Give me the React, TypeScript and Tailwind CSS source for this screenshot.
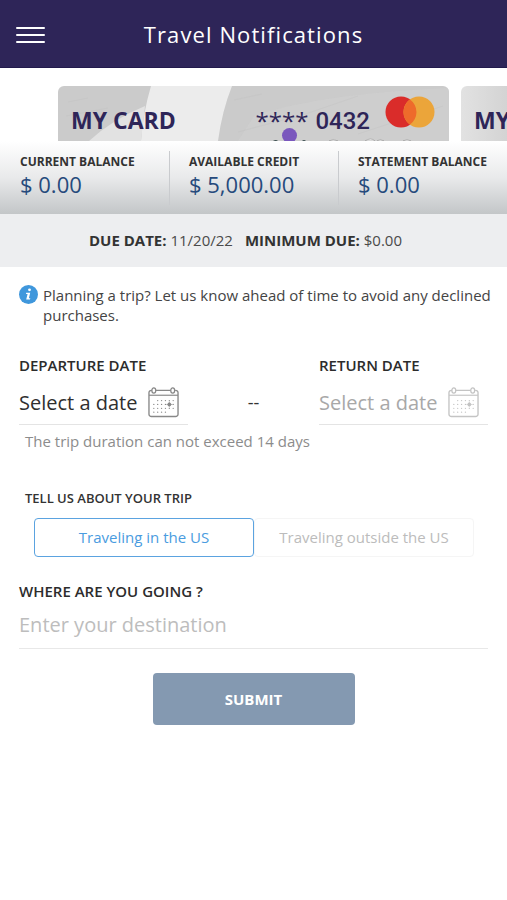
import { useState } from "react";

const balances = [
  { label: "CURRENT BALANCE", amount: "$ 0.00" },
  { label: "AVAILABLE CREDIT", amount: "$ 5,000.00" },
  { label: "STATEMENT BALANCE", amount: "$ 0.00" },
];

function CalendarIcon() {
  const rows = [
    { y: 13, xs: [9, 13, 17, 21, 25] },
    { y: 17, xs: [5, 9, 13, 17, 25] },
    { y: 21, xs: [5, 9, 13, 17, 21, 25] },
    { y: 25, xs: [5, 9, 13, 17] },
  ];
  return (
    <svg width="31" height="31" viewBox="0 0 32 32" fill="none" stroke="currentColor" aria-hidden="true">
      <path d="M4 3.5H3.5a2.5 2.5 0 0 0-2.5 2.5V28a2.5 2.5 0 0 0 2.5 2.5h25A2.5 2.5 0 0 0 31 28V6a2.5 2.5 0 0 0-2.5-2.5H28M8 3.5H23.5" strokeWidth="1.4" />
      <path d="M1 8.5H31" strokeWidth="1.2" />
      <ellipse cx="6" cy="3.5" rx="2" ry="2.7" strokeWidth="1.3" />
      <ellipse cx="25.5" cy="3.5" rx="2" ry="2.7" strokeWidth="1.3" />
      <g fill="currentColor" stroke="none">
        {rows.map((row) => row.xs.map((x) => <circle key={`${x}-${row.y}`} cx={x + 1} cy={row.y + 1} r="0.7" />))}
        <circle cx="22" cy="18" r="1.9" />
      </g>
      <path d="M19 18H25M22 15V21" strokeWidth="0.7" />
    </svg>
  );
}

function CardPattern() {
  return (
    <svg className="absolute inset-0 h-full w-full" viewBox="0 0 391 55" preserveAspectRatio="xMinYMin slice" aria-hidden="true">
      <rect width="391" height="55" fill="#cbcbcb" />
      <path d="M93 0H174Q164 25 160 55H83Q85 27 93 0Z" fill="#ececec" />
      <path d="M31 55Q55 33 87 20L83 55Z" fill="#e2e2e2" />
      <path d="M196 30Q260 8 391 2V55H180Z" fill="#d0d0d0" opacity="0.6" />
      <g stroke="#bdbdbd" strokeWidth="0.5" opacity="0.5">
        <path d="M176 14L204 8M230 34L300 10M300 48L385 20M180 46L240 30M10 16L30 12M8 30L50 22" />
      </g>
      <g fill="#f4f4f4" stroke="#8a8a8a" strokeWidth="0.5">
        <path d="M271 55q4-3 9 0zM307 55q6-4 10 0zM319 55q3-3 7 0zM345 55q4-3 8 0z" />
      </g>
      <path d="M215 55q3-2 5 0zM244 55q2-2 4 0z" fill="#3c4f50" />
    </svg>
  );
}

function NetworkLogo() {
  return (
    <svg width="50" height="32" viewBox="0 0 50 32" role="img" aria-label="Card network">
      <circle cx="16" cy="16" r="15.5" fill="#da2c2a" />
      <circle cx="34" cy="16" r="15.5" fill="#eba53a" />
      <path d="M25 3.4a15.5 15.5 0 0 1 0 25.2a15.5 15.5 0 0 1 0-25.2Z" fill="#ee6b2b" />
    </svg>
  );
}

function DateField({ id, label, muted }: { id: string; label: string; muted?: boolean }) {
  return (
    <div className="w-[169px]">
      <label htmlFor={id} className="block text-[15px] leading-5 font-semibold text-[#2c2c2c]">
        {label}
      </label>
      <div
        className={`mt-[6px] flex h-11 items-center border-b border-[#e4e4e4] pr-[9px] ${muted ? "text-[#c4c4c4]" : "text-[#888888]"}`}
      >
        <input
          id={id}
          readOnly
          disabled={muted}
          placeholder="Select a date"
          className={`w-0 min-w-0 flex-1 bg-transparent text-xl outline-none ${muted ? "placeholder:text-[#a8a8a8]" : "placeholder:text-[#2f2f2f]"}`}
        />
        <button type="button" disabled={muted} aria-label={`Choose ${label.toLowerCase()}`}>
          <CalendarIcon />
        </button>
      </div>
    </div>
  );
}

export default function App() {
  const [inUs, setInUs] = useState(true);
  const on = "border border-[#5ba3e0] text-[#4a9ce0] rounded";
  const off = "border border-[#f5f5f5] text-[#bcbcbc] rounded";

  return (
    <div className="min-h-screen bg-white font-['Open_Sans',sans-serif] text-[#333333]">
      <header className="relative flex h-[68px] items-center justify-center border-b border-[#221a4c] bg-[#2e2558] pt-[2px]">
        <button type="button" aria-label="Menu" className="absolute left-4 flex w-[29px] flex-col gap-[5px]">
          <span className="h-[2px] rounded bg-white" />
          <span className="h-[2px] rounded bg-white" />
          <span className="h-[2px] rounded bg-white" />
        </button>
        <h1 className="text-[22px] tracking-wider text-white">Travel Notifications</h1>
      </header>

      <section aria-label="Cards" className="mt-[18px] flex h-[55px] gap-3 overflow-hidden pl-[58px] text-[#2e2558]">
        <div className="relative w-[391px] shrink-0 overflow-hidden rounded-t-md">
          <CardPattern />
          <div className="relative flex h-full pl-[13px] pr-[14px]">
            <span className="mt-[18px] text-[23px] leading-8 font-bold">MY CARD</span>
            <span className="mt-[19px] ml-auto flex gap-[7px] text-2xl leading-8 font-medium">
              <span>****</span>
              <span className="font-['Roboto',sans-serif]">0432</span>
            </span>
            <span className="mt-[10px] ml-[15px]">
              <NetworkLogo />
            </span>
          </div>
          <span className="absolute top-[42px] left-[224px] size-[15px] rounded-full bg-[#7a57bd]" />
        </div>
        <div className="relative w-[391px] shrink-0 overflow-hidden rounded-t-md bg-linear-to-r from-[#e2e2e2] to-[#cfcfcf] to-[60px] pl-[13px]">
          <span className="mt-[18px] block text-[23px] leading-8 font-bold">MY CARD</span>
        </div>
      </section>

      <section className="flex h-[73px] bg-linear-to-b from-white via-[#e9eaeb] to-[#c3c6c8] pt-[10px]">
        {balances.map((b, i) => (
          <div key={b.label} className={`h-[54px] w-1/3 whitespace-nowrap ${i > 0 ? "border-l border-[#c9cbce] pl-[19px]" : "pl-5"}`}>
            <div className="pt-px text-xs leading-5 font-bold">{b.label}</div>
            <div className="text-[22px] leading-6 text-[#264a7c]">{b.amount}</div>
          </div>
        ))}
      </section>

      <section className="flex h-[53px] items-center justify-center gap-3 bg-[#edeef0] pr-4 text-[15px]">
        <p>
          <b>DUE DATE:</b> <span className="text-[#4a4a4a]">11/20/22</span>
        </p>
        <p>
          <b>MINIMUM DUE:</b> <span className="text-[#4a4a4a]">$0.00</span>
        </p>
      </section>

      <form className="px-[19px] pt-[18px]" onSubmit={(e) => e.preventDefault()}>
        <div className="-mr-3 flex gap-[5px]">
          <svg width="19" height="19" viewBox="0 0 19 19" className="shrink-0" aria-hidden="true">
            <circle cx="9.5" cy="9.5" r="9.5" fill="#3f97dc" />
            <circle cx="10.5" cy="4.8" r="1.4" fill="#fff" />
            <path d="M7.2 7.7H11.2L9.9 13.2H11.3L11 14.5H7.2L8.6 9H7Z" fill="#fff" />
          </svg>
          <p className="text-[15px] leading-5 text-[#444444]">
            Planning a trip? Let us know ahead of time to avoid any declined purchases.
          </p>
        </div>

        <div className="mt-[30px] flex justify-between">
          <DateField id="departure" label="DEPARTURE DATE" />
          <span className="mt-[26px] text-lg leading-[42px]">--</span>
          <DateField id="return" label="RETURN DATE" muted />
        </div>
        <p className="mt-[6px] pl-[6px] text-[15px] leading-5 text-[#8c8c8c]">The trip duration can not exceed 14 days</p>

        <h2 className="mt-[37px] pl-[6px] text-[13px] leading-5 font-semibold">TELL US ABOUT YOUR TRIP</h2>
        <div className="mt-[10px] grid h-[39px] grid-cols-2 pr-[14px] pl-[15px] text-[15px]">
          <button type="button" aria-pressed={inUs} onClick={() => setInUs(true)} className={inUs ? on : off}>
            Traveling in the US
          </button>
          <button type="button" aria-pressed={!inUs} onClick={() => setInUs(false)} className={inUs ? off : on}>
            Traveling outside the US
          </button>
        </div>

        <label htmlFor="destination" className="mt-6 block text-[15px] leading-5 font-semibold text-[#2c2c2c]">
          WHERE ARE YOU GOING ?
        </label>
        <input
          id="destination"
          placeholder="Enter your destination"
          className="h-12 w-full border-b border-[#e8e8e8] bg-transparent text-xl outline-none placeholder:text-[#bdbdbd]"
        />

        <button
          type="submit"
          className="mx-auto mt-6 block h-[52px] w-[202px] rounded bg-[#8499b1] text-[15px] font-bold text-white"
        >
          SUBMIT
        </button>
      </form>
    </div>
  );
}
